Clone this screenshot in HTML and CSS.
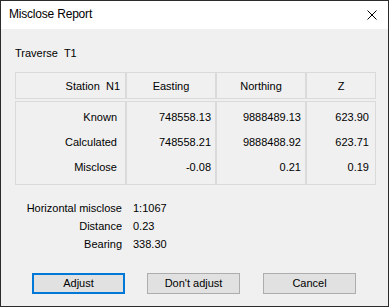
FILE: index.html
```html
<!DOCTYPE html>
<html>
<head>
<meta charset="utf-8">
<link rel="stylesheet" href="styles.css">
</head>
<body>
<div class="window">
  <div class="titlebar">
    <span class="title">Misclose Report</span>
    <svg class="close" width="10" height="10" viewBox="0 0 10 10"><path d="M0.5 0.5 L9.5 9.5 M9.5 0.5 L0.5 9.5" stroke="#000" stroke-width="1" fill="none"/></svg>
  </div>
  <div class="content">
    <div class="traverse">Traverse&nbsp; T1</div>
    <div class="grid head">
      <div class="cell c1">Station&nbsp; N1</div>
      <div class="cell center">Easting</div>
      <div class="cell center">Northing</div>
      <div class="cell center">Z</div>
    </div>
    <div class="grid body">
      <div class="cell c1 lbl"><div>Known</div><div>Calculated</div><div>Misclose</div></div>
      <div class="cell num"><div>748558.13</div><div>748558.21</div><div>-0.08</div></div>
      <div class="cell num"><div>9888489.13</div><div>9888488.92</div><div>0.21</div></div>
      <div class="cell num z"><div>623.90</div><div>623.71</div><div>0.19</div></div>
    </div>
    <div class="summary">
      <div class="k">Horizontal misclose</div><div class="v">1:1067</div>
      <div class="k">Distance</div><div class="v">0.23</div>
      <div class="k">Bearing</div><div class="v">338.30</div>
    </div>
    <div class="buttons">
      <button class="btn default">Adjust</button>
      <button class="btn">Don't adjust</button>
      <button class="btn last">Cancel</button>
    </div>
  </div>
</div>
</body>
</html>
```
FILE: styles.css
```css
html, body {
  margin: 0;
  padding: 0;
  background: #f0f0f0;
}
.window {
  box-sizing: border-box;
  width: 389px;
  height: 307px;
  border: 1px solid #2b2b2b;
  background: #f0f0f0;
  display: flex;
  flex-direction: column;
  font-family: "Liberation Sans", Arial, sans-serif;
  font-size: 11px;
  color: #000;
}
.titlebar {
  height: 28px;
  background: #fff;
  position: relative;
  flex: none;
}
.title {
  display: block;
  padding-left: 8px;
  font-size: 12px;
  letter-spacing: -0.2px;
  line-height: 26px;
  color: #000;
}
.close {
  position: absolute;
  left: 366px;
  top: 9px;
}
.content {
  flex: 1;
  padding: 17px 0 0 14px;
}
.traverse {
  line-height: 14px;
  margin-bottom: 12px;
}
.grid {
  display: grid;
  grid-template-columns: 111px 90px 90px 70px;
}
.cell {
  box-sizing: border-box;
  border: 1px solid #dadada;
}
.head .cell {
  height: 27px;
  padding-top: 2px;
  line-height: 23px;
}
.head .c1 {
  text-align: right;
  padding-right: 5px;
}
.center {
  text-align: center;
}
.body {
  margin-top: 2px;
}
.body .cell {
  height: 84px;
  padding-top: 3px;
  line-height: 25px;
  text-align: right;
  padding-right: 4px;
}
.body .lbl {
  padding-right: 8px;
}
.body .z {
  padding-right: 6px;
}
.summary {
  margin-top: 14px;
  display: grid;
  grid-template-columns: 107px auto;
  column-gap: 11px;
  line-height: 18px;
}
.summary .k {
  text-align: right;
}
.buttons {
  margin-top: 20px;
  padding-left: 17px;
  display: flex;
  gap: 22px;
}
.btn {
  box-sizing: border-box;
  width: 93px;
  height: 21px;
  margin: 0;
  padding: 0;
  background: #e1e1e1;
  border: 1px solid #adadad;
  font-family: "Liberation Sans", Arial, sans-serif;
  font-size: 11px;
  color: #000;
  line-height: 17px;
}
.btn.default {
  border: 2px solid #0078d7;
}
.btn.last {
  margin-left: 1px;
}
```
